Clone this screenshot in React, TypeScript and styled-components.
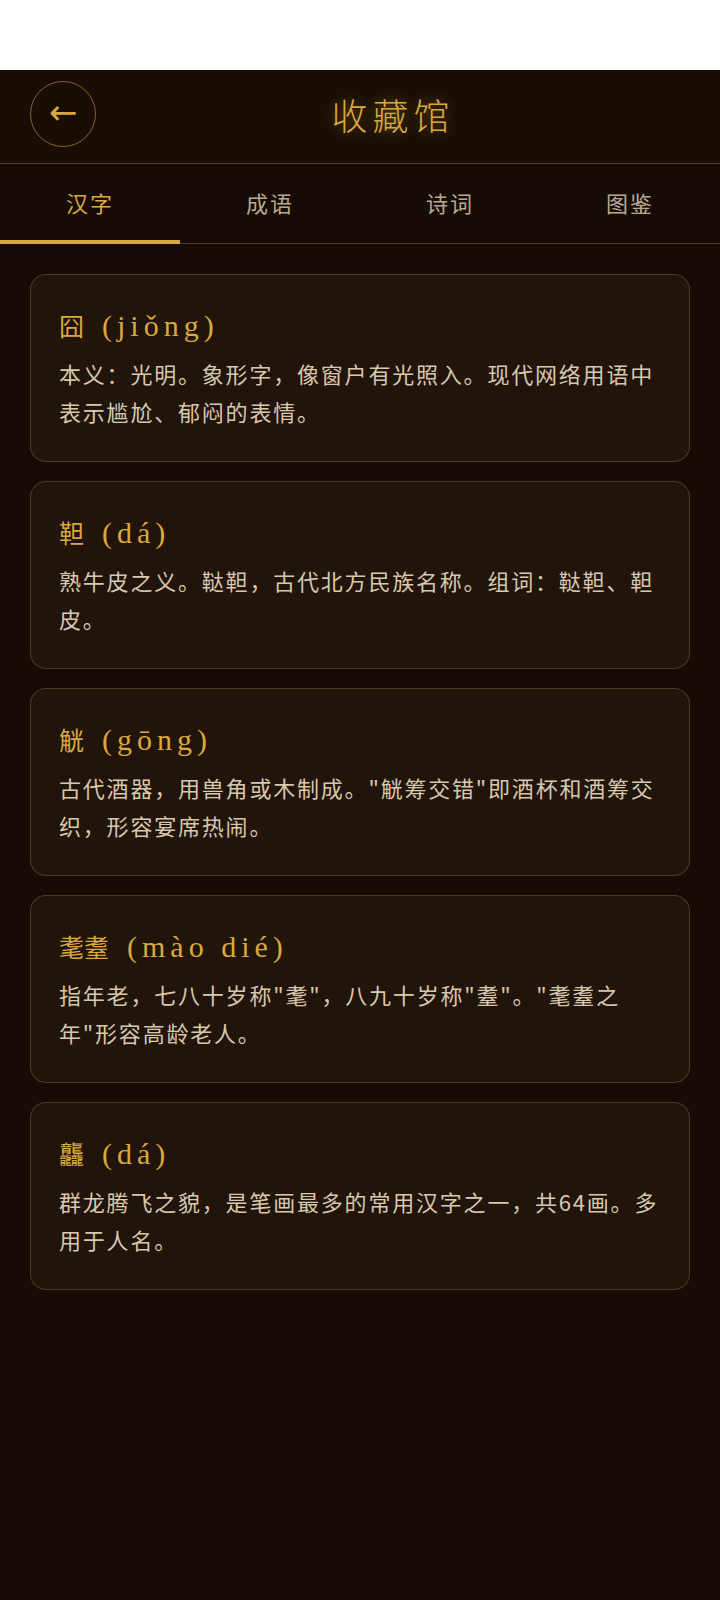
import * as React from 'react'
import styled, { createGlobalStyle } from 'styled-components'

const colors = {
  gold: '#d9a83e',
  goldSoft: 'rgba(217, 168, 62, 0.55)',
  page: '#170c05',
  card: '#21140a',
  cardBorder: 'rgba(196, 156, 96, 0.28)',
  text: '#d8c8ad',
  tab: '#b9a993',
  line: 'rgba(196, 156, 96, 0.35)',
}

const GlobalStyle = createGlobalStyle`
  html, body {
    margin: 0;
    padding: 0;
    background: #ffffff;
  }
  * {
    box-sizing: border-box;
  }
`

const TopSpace = styled.div`
  height: 70px;
  background: #ffffff;
`

const Screen = styled.div`
  min-height: 1530px;
  background: ${colors.page};
  font-family: 'Noto Sans CJK SC', 'Noto Sans', sans-serif;
`

const Header = styled.header`
  height: 94px;
  display: flex;
  align-items: center;
  padding: 0 30px 5px;
  background: #190e06;
  border-bottom: 1px solid ${colors.line};
`

const BackButton = styled.button`
  width: 66px;
  height: 66px;
  flex: none;
  border-radius: 50%;
  border: 1px solid ${colors.goldSoft};
  background: transparent;
  color: ${colors.gold};
  font-family: 'DejaVu Sans', sans-serif;
  font-size: 34px;
  line-height: 1;
  padding: 0 0 4px;
  display: flex;
  align-items: center;
  justify-content: center;
`

const Title = styled.h1`
  flex: 1;
  margin: 0;
  text-align: center;
  color: ${colors.gold};
  font-size: 36px;
  font-weight: 300;
  letter-spacing: 5px;
  text-shadow: 0 0 14px rgba(217, 168, 62, 0.45);
`

const Tabs = styled.nav`
  display: grid;
  grid-template-columns: repeat(4, 1fr);
  height: 80px;
  border-bottom: 1px solid ${colors.line};
`

const Tab = styled.div<{ $active?: boolean }>`
  display: flex;
  align-items: center;
  justify-content: center;
  font-size: 22px;
  letter-spacing: 2px;
  color: ${(p) => (p.$active ? colors.gold : colors.tab)};
  border-bottom: 4px solid ${(p) => (p.$active ? colors.gold : 'transparent')};
  margin-bottom: -1px;
`

const List = styled.main`
  display: flex;
  flex-direction: column;
  gap: 19px;
  padding: 30px 30px 30px;
`

const Card = styled.article`
  background: ${colors.card};
  border: 1px solid ${colors.cardBorder};
  border-radius: 16px;
  padding: 32px 28px 31px;
`

const CardTitle = styled.h3`
  margin: 0 0 3px;
  display: flex;
  align-items: baseline;
  gap: 18px;
  height: 44px;
  color: ${colors.gold};
  font-weight: 400;
`

const Hanzi = styled.span`
  font-size: 25px;
`

const Pinyin = styled.span`
  font-family: 'Liberation Serif', 'Noto Sans CJK SC', serif;
  font-size: 30px;
  letter-spacing: 5px;
`

const Desc = styled.p`
  margin: 0;
  color: ${colors.text};
  font-size: 22px;
  letter-spacing: 1.8px;
  line-height: 38px;
`

const entries = [
  { hanzi: '囧', pinyin: 'jiǒng', desc: '本义：光明。象形字，像窗户有光照入。现代网络用语中表示尴尬、郁闷的表情。' },
  { hanzi: '靼', pinyin: 'dá', desc: '熟牛皮之义。鞑靼，古代北方民族名称。组词：鞑靼、靼皮。' },
  { hanzi: '觥', pinyin: 'gōng', desc: '古代酒器，用兽角或木制成。"觥筹交错"即酒杯和酒筹交织，形容宴席热闹。' },
  { hanzi: '耄耋', pinyin: 'mào dié', desc: '指年老，七八十岁称"耄"，八九十岁称"耋"。"耄耋之年"形容高龄老人。' },
  { hanzi: '龘', pinyin: 'dá', desc: '群龙腾飞之貌，是笔画最多的常用汉字之一，共64画。多用于人名。' },
]

const tabs = ['汉字', '成语', '诗词', '图鉴']

export default function App() {
  return (
    <>
      <GlobalStyle />
      <TopSpace />
      <Screen>
        <Header>
          <BackButton aria-label='返回'>←</BackButton>
          <Title>收藏馆</Title>
        </Header>
        <Tabs>
          {tabs.map((t, i) => (
            <Tab key={t} $active={i === 0}>
              {t}
            </Tab>
          ))}
        </Tabs>
        <List>
          {entries.map((e) => (
            <Card key={e.hanzi}>
              <CardTitle>
                <Hanzi>{e.hanzi}</Hanzi>
                <Pinyin>({e.pinyin})</Pinyin>
              </CardTitle>
              <Desc>{e.desc}</Desc>
            </Card>
          ))}
        </List>
      </Screen>
    </>
  )
}
